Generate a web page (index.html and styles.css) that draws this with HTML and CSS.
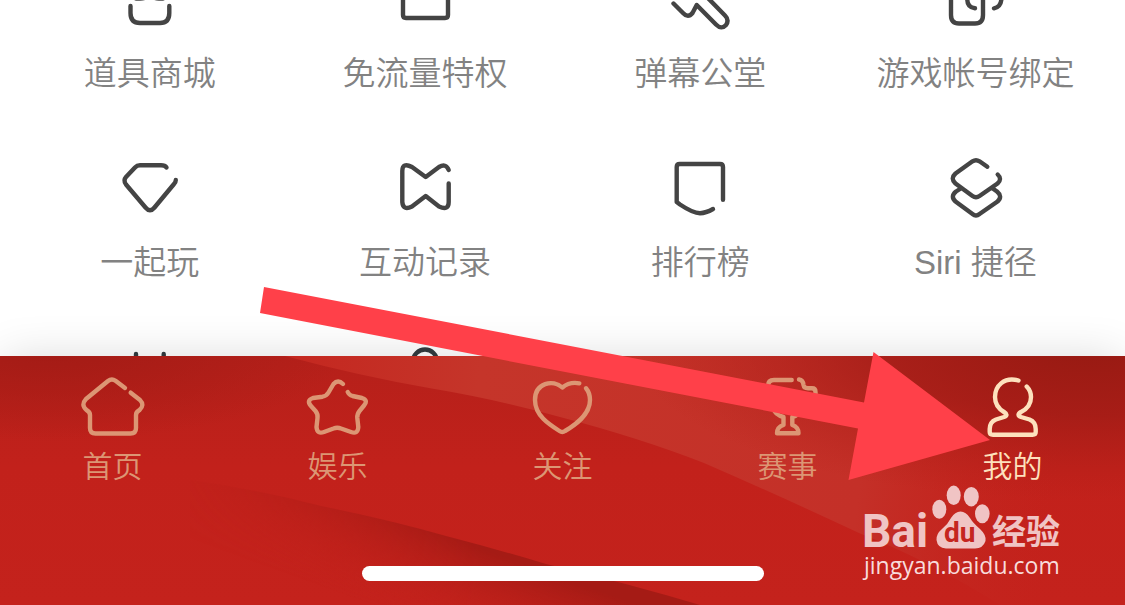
FILE: index.html
```html
<!DOCTYPE html>
<html lang="zh-CN">
<head>
<meta charset="utf-8">
<meta name="viewport" content="width=device-width, initial-scale=1">
<title>我的</title>
<link rel="stylesheet" href="styles.css">
</head>
<body>
<div class="app">
  <main class="content">
    <div class="grid">
      <a class="item" href="#shop">
        <svg class="icon" viewBox="117 -34 66 66" aria-hidden="true"><path d="M130.500 6V13Q130.500 23 140 23H160Q169.300 23 169.300 13V6M131-12Q131 0 140-1.500Q148-2 150-5Q152-2 159-1.500Q168 0 168-12V-24H131Z"/></svg>
        <span class="label">道具商城</span>
      </a>
      <a class="item" href="#free-data">
        <svg class="icon" viewBox="392 -34 66 66" aria-hidden="true"><path d="M403-24V15Q403 18 406 18H445Q448 18 448 15V-24Z"/></svg>
        <span class="label">免流量特权</span>
      </a>
      <a class="item" href="#danmu">
        <svg class="icon" viewBox="667 -34 66 66" aria-hidden="true"><path d="M673.500 3.500L683 13Q688 18.500 692.500 13L696.700 5L716 24.500Q721.500 30 726 25Q729.500 20 725 15.500L703-7"/></svg>
        <span class="label">弹幕公堂</span>
      </a>
      <a class="item" href="#bind">
        <svg class="icon" viewBox="942 -34 66 66" aria-hidden="true"><path d="M951-10V15Q951 23.500 959 23.500H975Q983 23.500 983 15V-10M967.300-10V0Q967.500 7.500 975 8.300M1001.300-10V0Q1000.500 7 994 8.300"/></svg>
        <span class="label">游戏帐号绑定</span>
      </a>
      <a class="item" href="#play">
        <svg class="icon" viewBox="117 155 66 66" aria-hidden="true"><path d="M166.500 167.500Q165 165.300 161 165.300H140Q137 165.300 135 167.500L126 177Q123 180.500 126 184.500L145.500 207.500Q150 213 154.500 207.500L174 184Q175.800 182 175.800 180"/></svg>
        <span class="label">一起玩</span>
      </a>
      <a class="item" href="#history">
        <svg class="icon" viewBox="392 155 66 66" aria-hidden="true"><path d="M448.700 170Q446 163 439 167L425.700 177L412 167Q402.300 162 402.300 171V202Q403 211 412 206.500L425.700 196L439 206.500Q448.700 211 448.700 202V183.500"/></svg>
        <span class="label">互动记录</span>
      </a>
      <a class="item" href="#rank">
        <svg class="icon" viewBox="667 155 66 66" aria-hidden="true"><path d="M723 199.700V167Q723 164 720 164H679.700Q676.700 164 676.700 167V202L680 204.500Q693 213.200 700 213.200Q706 213 713 209"/></svg>
        <span class="label">排行榜</span>
      </a>
      <a class="item" href="#siri">
        <svg class="icon" viewBox="942 155 66 66" aria-hidden="true"><path d="M987.300 166.700L979.500 161.300Q976 159 972.500 161.300L955.500 173.500Q950 178.500 955.500 183.500L972.500 196Q976 198.500 979.500 196L997.500 183.500Q1002.500 179 997.700 174.500M960 189L956 191.500Q950 196.500 955.500 201.500L972.500 214Q976 217 979.500 214L997.500 201.500Q1003 196.500 997 191.500L992 188"/></svg>
        <span class="label">Siri 捷径</span>
      </a>
      <a class="item" href="#tv" aria-label="赛事直播">
        <svg class="icon dim" viewBox="117 344 66 66" aria-hidden="true"><path d="M136 354V364H163.700V354"/></svg>
      </a>
      <a class="item" href="#service" aria-label="客服">
        <svg class="icon dim" viewBox="392 344 66 66" aria-hidden="true"><circle cx="425" cy="361.500" r="12"/></svg>
      </a>
    </div>
  </main>

  <footer class="tabbar">
    <svg class="art" viewBox="0 0 1125 249" preserveAspectRatio="none" aria-hidden="true">
      <defs>
        <linearGradient id="base" x1="0" y1="0" x2="0" y2="1"><stop offset="0" stop-color="#b5201a"/><stop offset=".45" stop-color="#c2211b"/><stop offset="1" stop-color="#c4221c"/></linearGradient>
        <radialGradient id="corner" gradientUnits="userSpaceOnUse" cx="0" cy="0" r="1" gradientTransform="translate(50 -10) scale(300 95)"><stop offset="0" stop-color="#a31b15"/><stop offset="1" stop-color="#a31b15" stop-opacity="0"/></radialGradient>
        <radialGradient id="right" gradientUnits="userSpaceOnUse" cx="0" cy="0" r="1" gradientTransform="translate(1090 -10) scale(460 155)"><stop offset="0" stop-color="#971a12"/><stop offset=".45" stop-color="#a21c16" stop-opacity=".8"/><stop offset="1" stop-color="#b31f18" stop-opacity="0"/></radialGradient>
        <linearGradient id="band" gradientUnits="userSpaceOnUse" x1="285" y1="0" x2="1060" y2="100"><stop offset="0" stop-color="#c4271f"/><stop offset=".25" stop-color="#c5352a"/><stop offset=".75" stop-color="#c43028"/><stop offset="1" stop-color="#c4251e" stop-opacity="0"/></linearGradient>
        <linearGradient id="fold" gradientUnits="userSpaceOnUse" x1="440" y1="178" x2="410" y2="262"><stop offset="0" stop-color="#a51b15"/><stop offset=".35" stop-color="#b31e18" stop-opacity=".8"/><stop offset="1" stop-color="#c4221c" stop-opacity="0"/></linearGradient>
        <linearGradient id="fade" gradientUnits="userSpaceOnUse" x1="160" y1="0" x2="480" y2="0"><stop offset="0" stop-color="#000"/><stop offset="1" stop-color="#fff"/></linearGradient>
        <mask id="foldmask"><rect width="1125" height="249" fill="url(#fade)"/></mask>
      </defs>
      <rect width="1125" height="249" fill="url(#base)"/>
      <rect width="400" height="160" fill="url(#corner)"/>
      <path d="M285 0Q360 20 429 32Q500 44 560 61Q640 82 704 107Q780 140 859 177Q930 205 1000 249H1125V0Z" fill="url(#band)"/>
      <rect x="600" width="525" height="160" fill="url(#right)"/>
      <path d="M190 124Q260 134 321 150Q390 164 446 180Q500 194 546 208Q630 228 700 249H190Z" fill="url(#fold)" mask="url(#foldmask)"/>
    </svg>
    <nav class="tabs">
      <a class="tab" href="#home">
        <svg class="icon" viewBox="80 373 66 66" aria-hidden="true"><path d="M125 388L115.500 380.700Q111.700 378 108 381L86 399Q80.500 405 86.500 410Q90 412 90 415V428Q90 433.500 95.500 433.500H130.500Q136 433.500 136 428V415Q136 412 139.500 410Q145 405 140 400L130.700 392.700"/></svg>
        <span class="tab-label">首页</span>
      </a>
      <a class="tab" href="#fun">
        <svg class="icon" viewBox="305 373 66 66" aria-hidden="true"><path d="M343 384Q338 379 333.500 384L328.500 392.500Q326.500 396 322.500 396.700L313 398Q306 400.500 311 406L315.500 411Q318 414 317.500 418L316.500 427Q317 434.500 324 432L333.500 428.500Q337.300 427 341 428.500L351 432Q358 434.500 358.300 427L357.300 418Q357 414 359.500 411L364 405.500Q368.500 400 362 398L352.500 396Q349 395 347.700 392"/></svg>
        <span class="tab-label">娱乐</span>
      </a>
      <a class="tab" href="#follow">
        <svg class="icon" viewBox="530 373 66 66" aria-hidden="true"><path d="M579.300 383.300Q569.500 381.500 562.300 387.500C553 379 535 383 535 400C535 416 550 425 559.500 431Q562.300 433 565 431C575 425 590 415 590 400Q590 393 586 388.300"/></svg>
        <span class="tab-label">关注</span>
      </a>
      <a class="tab" href="#match">
        <svg class="icon" viewBox="756 373 66 66" aria-hidden="true"><path d="M792.700 380H775Q769 380 769 386V397Q770 404 776 404M800 379.500Q804 380 804.500 385Q805 388.300 809 388.300H813Q816.500 388.300 816.500 392V397Q815 406 806 408M774 408Q776 415 784.500 417V425Q778 427 778 433.300H799.500Q799.500 427 793.300 425V417Q801 415 804 408"/></svg>
        <span class="tab-label">赛事</span>
      </a>
      <a class="tab active" href="#me" aria-current="page">
        <svg class="icon" viewBox="980 373 66 66" aria-hidden="true"><path d="M1018.500 380.500C1004 376.500 995 386 995 397C995 405 999 409 1004 412Q1009 415 1004 417L996 419.500Q989.700 422 989.700 429V432Q989.700 434.700 993 434.700H1032.500Q1035.700 434.700 1035.700 432V429Q1035.700 422 1029.500 419.500L1021 417Q1016 415 1021 412C1027 409 1031 404 1031 397Q1031 391 1026.700 386.500"/></svg>
        <span class="tab-label">我的</span>
      </a>
    </nav>
    <div class="home-indicator"></div>
    <svg class="watermark" viewBox="860 482 208 102" role="img" aria-label="Baidu 经验">
      <ellipse cx="939.300" cy="509.300" rx="7" ry="9.500"/><ellipse cx="953.700" cy="495.300" rx="7" ry="9.700"/><ellipse cx="971.300" cy="496.700" rx="7.500" ry="9.700"/><ellipse cx="982.300" cy="513.700" rx="7.300" ry="9.500"/>
      <path d="M960.500 511.500Q966 511.500 970 518Q973 523 980 529Q986.500 535 985.500 541Q983 548.500 975 548.500H946Q937.500 548 936.500 540Q936 534 942 529Q948 524 951 518Q955 511.500 960.500 511.500Z"/>
      <text class="wm-bai" x="862" y="547">Bai</text>
      <text class="wm-du" x="944" y="542">du</text>
      <text class="wm-cn" x="992" y="544">经验</text>
      <text class="wm-url" x="864" y="574">jingyan.baidu.com</text>
    </svg>
  </footer>

  <svg class="pointer" viewBox="0 0 1125 605" preserveAspectRatio="none" aria-hidden="true"><path d="M264 287L864 402.500L873.500 352L990 440L848.500 480L858 428.500L260 313Z"/></svg>
</div>
</body>
</html>
```
FILE: styles.css
```css
* {
  box-sizing: border-box;
}

body {
  margin: 0;
  background: #fff;
  font-family: "Liberation Sans", "Noto Sans CJK SC", sans-serif;
}

a {
  color: inherit;
  text-decoration: none;
}

.app {
  position: relative;
  display: flex;
  flex-direction: column;
  height: 100vh;
  overflow: hidden;
}

.content {
  flex: 1;
  min-height: 0;
  overflow: hidden;
}

/* The list is scrolled part of the way through its first row. */
.grid {
  display: grid;
  grid-template-columns: repeat(4, 1fr);
  row-gap: 61px;
  margin-top: -34px;
  padding: 0 12px;
}

.item,
.tab {
  display: flex;
  flex-direction: column;
  align-items: center;
}

.item {
  gap: 22px;
  color: #828282;
}

.icon {
  width: 66px;
  height: 66px;
  fill: none;
  stroke: #444;
  stroke-width: 4.4;
  stroke-linecap: round;
  stroke-linejoin: round;
}

.dim {
  stroke: #333c40;
}

.label {
  font-size: 33px;
  font-weight: 350;
  line-height: 40px;
  white-space: nowrap;
}

.tabbar {
  position: relative;
  padding: 17px 0 24px;
  background: #c2211b;
  box-shadow: 0 0 44px -4px rgba(0, 0, 0, 0.16);
}

.art {
  position: absolute;
  inset: 0;
  width: 100%;
  height: 100%;
}

.tabs {
  position: relative;
  display: grid;
  grid-template-columns: repeat(5, 1fr);
}

.tab {
  gap: 8px;
  color: #dc9674;
}

.tab .icon {
  stroke: currentColor;
}

.active {
  color: #fde1bd;
}

.tab-label {
  font-size: 30px;
  font-weight: 350;
  line-height: 40px;
}

.home-indicator {
  position: relative;
  width: 402px;
  height: 15px;
  margin: 79px auto 0;
  border-radius: 8px;
  background: #fff;
}

.watermark {
  position: absolute;
  right: 57px;
  bottom: 21px;
  width: 208px;
  height: 102px;
  fill: #f0c4c4;
  font-family: Roboto, "Noto Sans CJK SC", sans-serif;
}

.wm-bai {
  font-size: 46px;
  font-weight: 700;
}

.wm-du {
  font-size: 28px;
  font-weight: 700;
  fill: #c5261f;
}

.wm-cn {
  font-size: 34px;
  font-weight: 700;
}

.wm-url {
  font-family: "Open Sans", "Noto Sans", sans-serif;
  font-size: 23px;
  font-weight: 500;
  fill: #f8dcdc;
}

.pointer {
  position: absolute;
  inset: 0;
  width: 100%;
  height: 100%;
  fill: #ff4049;
  pointer-events: none;
}
```
